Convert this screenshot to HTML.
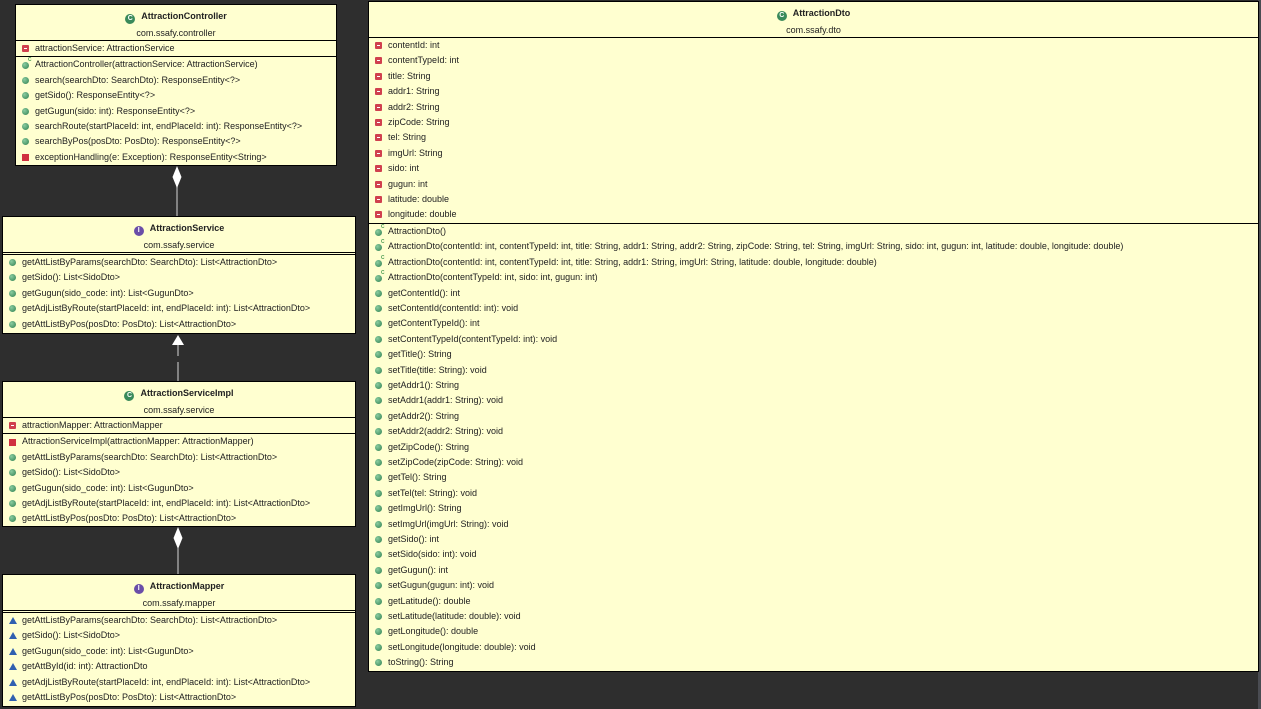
<!DOCTYPE html>
<html><head><meta charset="utf-8"><style>
*{margin:0;padding:0;box-sizing:border-box}
body{width:1261px;height:709px;background:#2e2e2e;position:relative;overflow:hidden;font-family:"Liberation Sans",sans-serif;font-size:9px;color:#222}
.sb{position:absolute;right:0;top:0;width:3px;height:709px;background:#4a4c52}
.box{position:absolute;background:#ffffd0;border:1px solid #000}
.hd{height:35px;position:relative;text-align:center}
.t{position:absolute;left:0;right:0;top:6px;font-weight:bold;font-size:9px}
.p{position:absolute;left:0;right:0;top:23px}
.sec{border-top:1px solid #000}
.dbl{border-top:1px solid #000;height:3px;border-bottom:1px solid #000}
.r{height:15.42px;line-height:14px;padding-left:19px;position:relative;white-space:nowrap}
.r i{position:absolute;left:6px;top:4px}
.f{width:7px;height:7px;background:#d0404e;border-radius:1px}
.f:after{content:"";position:absolute;left:2px;top:3px;width:3px;height:1px;background:#fff}
.m{width:7px;height:7px;border-radius:50%;background:radial-gradient(circle at 35% 35%,#8acca0,#2f8050)}
.c{width:7px;height:7px;border-radius:50%;background:radial-gradient(circle at 35% 35%,#8acca0,#2f8050);top:5px!important}
.c:after{content:"c";position:absolute;left:6px;top:-5px;font-size:7px;color:#2a8a3a;font-style:normal;line-height:6px}
.pm{width:7px;height:7px;background:#d03040}
.a{width:0;height:0;border-left:4px solid transparent;border-right:4px solid transparent;border-bottom:7px solid #3060b0}
.ic{display:inline-block;width:10px;height:10px;border-radius:50%;color:#fff;font-size:7px;font-weight:bold;line-height:10px;text-align:center;vertical-align:-1px;margin-right:6px}
.gc{background:#3a8a5a}.ii{background:#6a4ea8}
</style></head><body>
<div class="sb"></div>

<svg width="370" height="709" style="position:absolute;left:0;top:0">
<line x1="177" y1="186" x2="177" y2="216" stroke="#bbb" stroke-width="1.2"/>
<polygon points="177,166 181.5,177 177,188 172.5,177" fill="#fff"/>
<polygon points="178,335 184,345 172,345" fill="#fff"/>
<line x1="178" y1="345" x2="178" y2="356" stroke="#bbb" stroke-width="1.2"/>
<line x1="178" y1="362" x2="178" y2="381" stroke="#bbb" stroke-width="1.2"/>
<polygon points="178,527 182.5,538 178,549 173.5,538" fill="#fff"/>
<line x1="178" y1="548" x2="178" y2="574" stroke="#bbb" stroke-width="1.2"/>
</svg>

<div class="box" style="left:15px;top:4px;width:322px;height:162px">
<div class="hd"><div class="t"><span class="ic gc">C</span>AttractionController</div><div class="p">com.ssafy.controller</div></div>
<div class="sec"><div class="r"><i class="f"></i>attractionService: AttractionService</div></div>
<div class="sec">
<div class="r"><i class="c"></i>AttractionController(attractionService: AttractionService)</div>
<div class="r"><i class="m"></i>search(searchDto: SearchDto): ResponseEntity&lt;?&gt;</div>
<div class="r"><i class="m"></i>getSido(): ResponseEntity&lt;?&gt;</div>
<div class="r"><i class="m"></i>getGugun(sido: int): ResponseEntity&lt;?&gt;</div>
<div class="r"><i class="m"></i>searchRoute(startPlaceId: int, endPlaceId: int): ResponseEntity&lt;?&gt;</div>
<div class="r"><i class="m"></i>searchByPos(posDto: PosDto): ResponseEntity&lt;?&gt;</div>
<div class="r"><i class="pm"></i>exceptionHandling(e: Exception): ResponseEntity&lt;String&gt;</div>
</div></div>

<div class="box" style="left:2px;top:216px;width:354px;height:118px">
<div class="hd"><div class="t"><span class="ic ii">I</span>AttractionService</div><div class="p">com.ssafy.service</div></div>
<div class="dbl"></div>
<div>
<div class="r"><i class="m"></i>getAttListByParams(searchDto: SearchDto): List&lt;AttractionDto&gt;</div>
<div class="r"><i class="m"></i>getSido(): List&lt;SidoDto&gt;</div>
<div class="r"><i class="m"></i>getGugun(sido_code: int): List&lt;GugunDto&gt;</div>
<div class="r"><i class="m"></i>getAdjListByRoute(startPlaceId: int, endPlaceId: int): List&lt;AttractionDto&gt;</div>
<div class="r"><i class="m"></i>getAttListByPos(posDto: PosDto): List&lt;AttractionDto&gt;</div>
</div></div>

<div class="box" style="left:2px;top:381px;width:354px;height:146px">
<div class="hd"><div class="t"><span class="ic gc">C</span>AttractionServiceImpl</div><div class="p">com.ssafy.service</div></div>
<div class="sec"><div class="r"><i class="f"></i>attractionMapper: AttractionMapper</div></div>
<div class="sec">
<div class="r"><i class="pm" style="top:5px"></i>AttractionServiceImpl(attractionMapper: AttractionMapper)</div>
<div class="r"><i class="m"></i>getAttListByParams(searchDto: SearchDto): List&lt;AttractionDto&gt;</div>
<div class="r"><i class="m"></i>getSido(): List&lt;SidoDto&gt;</div>
<div class="r"><i class="m"></i>getGugun(sido_code: int): List&lt;GugunDto&gt;</div>
<div class="r"><i class="m"></i>getAdjListByRoute(startPlaceId: int, endPlaceId: int): List&lt;AttractionDto&gt;</div>
<div class="r"><i class="m"></i>getAttListByPos(posDto: PosDto): List&lt;AttractionDto&gt;</div>
</div></div>

<div class="box" style="left:2px;top:574px;width:354px;height:133px">
<div class="hd"><div class="t"><span class="ic ii">I</span>AttractionMapper</div><div class="p">com.ssafy.mapper</div></div>
<div class="dbl"></div>
<div>
<div class="r"><i class="a"></i>getAttListByParams(searchDto: SearchDto): List&lt;AttractionDto&gt;</div>
<div class="r"><i class="a"></i>getSido(): List&lt;SidoDto&gt;</div>
<div class="r"><i class="a"></i>getGugun(sido_code: int): List&lt;GugunDto&gt;</div>
<div class="r"><i class="a"></i>getAttById(id: int): AttractionDto</div>
<div class="r"><i class="a"></i>getAdjListByRoute(startPlaceId: int, endPlaceId: int): List&lt;AttractionDto&gt;</div>
<div class="r"><i class="a"></i>getAttListByPos(posDto: PosDto): List&lt;AttractionDto&gt;</div>
</div></div>

<div class="box" style="left:368px;top:1px;width:891px;height:671px">
<div class="hd"><div class="t"><span class="ic gc">C</span>AttractionDto</div><div class="p">com.ssafy.dto</div></div>
<div class="sec">
<div class="r"><i class="f"></i>contentId: int</div>
<div class="r"><i class="f"></i>contentTypeId: int</div>
<div class="r"><i class="f"></i>title: String</div>
<div class="r"><i class="f"></i>addr1: String</div>
<div class="r"><i class="f"></i>addr2: String</div>
<div class="r"><i class="f"></i>zipCode: String</div>
<div class="r"><i class="f"></i>tel: String</div>
<div class="r"><i class="f"></i>imgUrl: String</div>
<div class="r"><i class="f"></i>sido: int</div>
<div class="r"><i class="f"></i>gugun: int</div>
<div class="r"><i class="f"></i>latitude: double</div>
<div class="r"><i class="f"></i>longitude: double</div>
</div>
<div class="sec">
<div class="r"><i class="c"></i>AttractionDto()</div>
<div class="r"><i class="c"></i>AttractionDto(contentId: int, contentTypeId: int, title: String, addr1: String, addr2: String, zipCode: String, tel: String, imgUrl: String, sido: int, gugun: int, latitude: double, longitude: double)</div>
<div class="r"><i class="c"></i>AttractionDto(contentId: int, contentTypeId: int, title: String, addr1: String, imgUrl: String, latitude: double, longitude: double)</div>
<div class="r"><i class="c"></i>AttractionDto(contentTypeId: int, sido: int, gugun: int)</div>
<div class="r"><i class="m"></i>getContentId(): int</div>
<div class="r"><i class="m"></i>setContentId(contentId: int): void</div>
<div class="r"><i class="m"></i>getContentTypeId(): int</div>
<div class="r"><i class="m"></i>setContentTypeId(contentTypeId: int): void</div>
<div class="r"><i class="m"></i>getTitle(): String</div>
<div class="r"><i class="m"></i>setTitle(title: String): void</div>
<div class="r"><i class="m"></i>getAddr1(): String</div>
<div class="r"><i class="m"></i>setAddr1(addr1: String): void</div>
<div class="r"><i class="m"></i>getAddr2(): String</div>
<div class="r"><i class="m"></i>setAddr2(addr2: String): void</div>
<div class="r"><i class="m"></i>getZipCode(): String</div>
<div class="r"><i class="m"></i>setZipCode(zipCode: String): void</div>
<div class="r"><i class="m"></i>getTel(): String</div>
<div class="r"><i class="m"></i>setTel(tel: String): void</div>
<div class="r"><i class="m"></i>getImgUrl(): String</div>
<div class="r"><i class="m"></i>setImgUrl(imgUrl: String): void</div>
<div class="r"><i class="m"></i>getSido(): int</div>
<div class="r"><i class="m"></i>setSido(sido: int): void</div>
<div class="r"><i class="m"></i>getGugun(): int</div>
<div class="r"><i class="m"></i>setGugun(gugun: int): void</div>
<div class="r"><i class="m"></i>getLatitude(): double</div>
<div class="r"><i class="m"></i>setLatitude(latitude: double): void</div>
<div class="r"><i class="m"></i>getLongitude(): double</div>
<div class="r"><i class="m"></i>setLongitude(longitude: double): void</div>
<div class="r"><i class="m"></i>toString(): String</div>
</div></div>
</body></html>
